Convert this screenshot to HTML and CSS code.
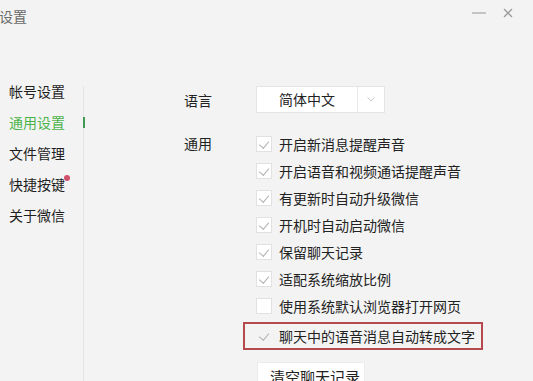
FILE: index.html
```html
<!DOCTYPE html>
<html lang="zh-CN">
<head>
<meta charset="utf-8">
<link rel="stylesheet" href="styles.css">
</head>
<body>
<div class="window">
  <div class="titlebar">
    <span class="title">设置</span>
    <div class="controls">
      <span class="min"></span>
      <svg class="close" width="10" height="10" viewBox="0 0 10 10"><path d="M1 1L9 9M9 1L1 9" stroke="#9a9a9a" stroke-width="1.3"/></svg>
    </div>
  </div>
  <div class="main">
    <nav class="nav">
      <div class="nav-item">帐号设置</div>
      <div class="nav-item active">通用设置</div>
      <div class="nav-item">文件管理</div>
      <div class="nav-item">快捷按键<span class="dot"></span></div>
      <div class="nav-item">关于微信</div>
    </nav>
    <div class="divider"><span class="indicator"></span></div>
    <section class="content">
      <div class="row lang-row">
        <div class="label">语言</div>
        <div class="select">
          <span class="select-text">简体中文</span>
          <span class="select-arrow">
            <svg width="8" height="5" viewBox="0 0 8 5"><path d="M0.5 0.5L4 4L7.5 0.5" fill="none" stroke="#c8c8c8" stroke-width="1"/></svg>
          </span>
        </div>
      </div>
      <div class="row general">
        <div class="label label-general">通用</div>
        <div class="options">
          <div class="opt"><span class="cb checked"></span>开启新消息提醒声音</div>
          <div class="opt"><span class="cb checked"></span>开启语音和视频通话提醒声音</div>
          <div class="opt"><span class="cb checked"></span>有更新时自动升级微信</div>
          <div class="opt"><span class="cb checked"></span>开机时自动启动微信</div>
          <div class="opt"><span class="cb checked"></span>保留聊天记录</div>
          <div class="opt"><span class="cb checked"></span>适配系统缩放比例</div>
          <div class="opt"><span class="cb"></span>使用系统默认浏览器打开网页</div>
          <div class="opt highlight"><span class="cb checked plain"></span>聊天中的语音消息自动转成文字</div>
          <div class="btn">清空聊天记录</div>
        </div>
      </div>
    </section>
  </div>
</div>
</body>
</html>
```

FILE: styles.css
```css
* { box-sizing: border-box; }
html, body {
  margin: 0;
  padding: 0;
  width: 533px;
  height: 381px;
  overflow: hidden;
  background: #f3f3f3;
}
body {
  font-family: "Noto Sans CJK SC", "Noto Sans", sans-serif;
  font-size: 14px;
  color: #222;
}
.window {
  width: 533px;
  height: 381px;
  display: flex;
  flex-direction: column;
  overflow: hidden;
}
.titlebar {
  flex: none;
  height: 76px;
  display: flex;
  justify-content: space-between;
  align-items: flex-start;
  padding-top: 5px;
}
.title {
  font-size: 14px;
  color: #6a6a6a;
  margin-left: -1px;
  line-height: 22px;
}
.controls {
  display: flex;
  align-items: center;
  gap: 17px;
  padding-right: 20px;
  padding-top: 3px;
}
.min {
  width: 14px;
  height: 2px;
  background: #c4c4c4;
  display: block;
}
.close { display: block; }
.main {
  flex: 1;
  min-height: 0;
  display: flex;
}
.nav {
  width: 83px;
  flex: none;
  padding-left: 9px;
}
.nav-item {
  height: 31px;
  line-height: 31px;
  white-space: nowrap;
  position: relative;
  color: #1f1f1f;
}
.nav-item.active { color: #4bb34a; }
.dot {
  position: absolute;
  left: 55px;
  top: 6px;
  width: 6px;
  height: 6px;
  border-radius: 50%;
  background: #d0506a;
}
.divider {
  width: 1px;
  flex: none;
  margin-top: 10px;
  background: #e4e4e4;
}
.indicator {
  display: block;
  width: 2px;
  height: 11px;
  margin-top: 31px;
  background: #3f9a52;
}
.content {
  flex: 1;
  padding-left: 100px;
}
.row { display: flex; }
.label {
  width: 72px;
  flex: none;
}
.lang-row {
  margin-top: 10px;
  align-items: center;
  height: 27px;
}
.select {
  width: 129px;
  height: 27px;
  background: #fff;
  border: 1px solid #e4e4e4;
  display: flex;
}
.select-text {
  width: 101px;
  text-align: center;
  line-height: 25px;
  border-right: 1px solid #e8e8e8;
}
.select-arrow {
  flex: 1;
  display: flex;
  align-items: center;
  justify-content: center;
}
.general { margin-top: 17px; }
.label-general { line-height: 27px; }
.options {
  display: flex;
  flex-direction: column;
  align-items: flex-start;
}
.opt {
  height: 27px;
  display: flex;
  align-items: center;
  white-space: nowrap;
  flex: none;
}
.cb {
  width: 16px;
  height: 16px;
  background: #fff;
  border: 1px solid #e1e1e1;
  margin-right: 7px;
  position: relative;
  flex: none;
}
.cb.checked::after {
  content: "";
  position: absolute;
  left: 4px;
  top: 2px;
  width: 5px;
  height: 8px;
  border-right: 1.3px solid #b3b3b3;
  border-bottom: 1.3px solid #b3b3b3;
  transform: rotate(40deg);
}
.cb.plain {
  border-color: #f3f3f3;
  background: transparent;
}
.highlight {
  margin-top: 3px;
  margin-left: -13px;
  width: 240px;
  height: 28px;
  border: 2px solid #b44a4e;
  padding-left: 11px;
}
.btn {
  flex: none;
  margin-top: 12px;
  margin-left: 1px;
  width: 108px;
  height: 28px;
  background: #fff;
  border: 1px solid #ececec;
  font-size: 15px;
  line-height: 28px;
  padding-left: 12px;
  white-space: nowrap;
}
```
